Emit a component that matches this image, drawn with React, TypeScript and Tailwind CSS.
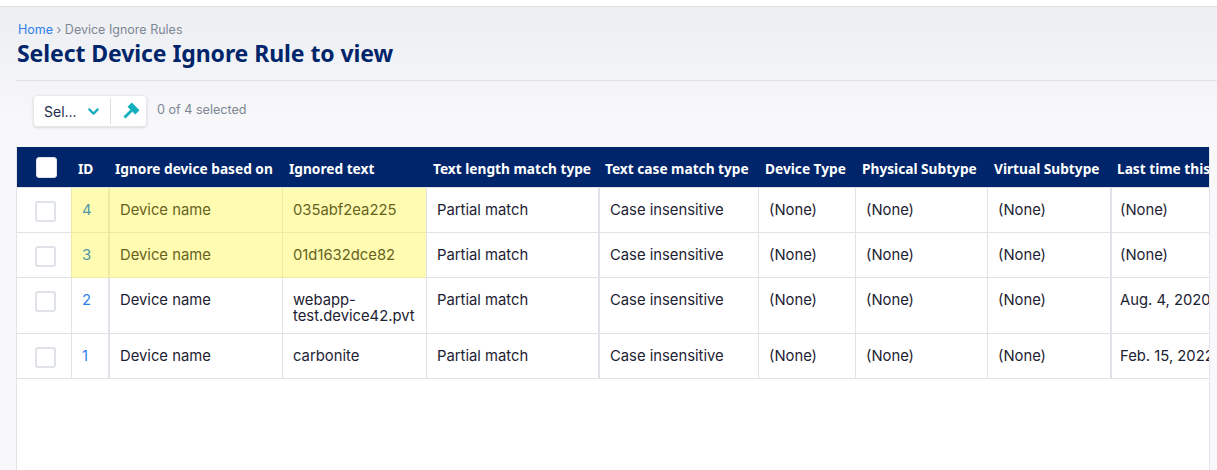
import React from 'react';
import { ChevronDown } from 'lucide-react';

interface Rule {
  id: number;
  text: string[];
  last: string;
  highlight?: boolean;
}

const rules: Rule[] = [
  { id: 4, text: ['035abf2ea225'], last: '(None)', highlight: true },
  { id: 3, text: ['01d1632dce82'], last: '(None)', highlight: true },
  { id: 2, text: ['webapp-', 'test.device42.pvt'], last: 'Aug. 4, 2020, 1:15 p.m.' },
  { id: 1, text: ['carbonite'], last: 'Feb. 15, 2022, 9:02 a.m.' },
];

const headers = [
  'ID',
  'Ignore device based on',
  'Ignored text',
  'Text length match type',
  'Text case match type',
  'Device Type',
  'Physical Subtype',
  'Virtual Subtype',
  'Last time this rule was used',
];

const cell = 'border-b border-l border-[#dfe2e7] px-[10px] pt-[14px] pb-[9px] align-top';
const yellow = 'bg-[#fffbb0] border-[#eeeaa6] text-[#66631f]';

const Hammer = () => (
  <svg viewBox="0 0 20 20" className="ml-[10px] h-[20px] w-[20px] text-[#12aebd]" fill="currentColor">
    <rect x="7" y="4.5" width="11" height="6" transform="rotate(45 12.5 7.5)" />
    <path d="M9.5 8.5 L11.5 10.5 L4.5 17.5 L2.5 15.5 Z" />
  </svg>
);

export default function App() {
  return (
    <div className="h-[470px] w-[1217px] overflow-hidden bg-white font-['Inter',sans-serif]">
      <div className="h-[7px] border-b border-[#dfe1e6] bg-white" />

      <div className="h-[463px] bg-gradient-to-b from-[#eceef2] via-[#f8f8fa] via-[25%] to-[#f8f8fa] pl-[16px]">
        {/* Header */}
        <div className="border-b border-[#dfe1e6] pb-[11px] pl-px pt-[15px]">
          <div className="pl-px text-[12.5px] leading-[15px] text-[#7d8794]">
            <a className="text-[#2f7fef]">Home</a> › Device Ignore Rules
          </div>
          <h1 className="font-['Noto_Sans',sans-serif] text-[23px] font-bold leading-[32px] tracking-[-0.08px] text-[#00256a]">
            Select Device Ignore Rule to view
          </h1>
        </div>

        {/* Actions */}
        <div className="flex items-center pl-[17px] pt-[14px]">
          <div className="flex h-[32px] w-[114px] items-center rounded-[4px] border border-[#e6e8ec] bg-white shadow-sm">
            <span className="pl-[10px] text-[14px] text-[#1d2b4a]">Sel...</span>
            <ChevronDown className="ml-[8px] h-[17px] w-[17px] text-[#12aebd]" strokeWidth={3} />
            <div className="ml-[8px] h-[26px] w-px bg-[#dcdfe4]" />
            <Hammer />
          </div>
          <span className="ml-[10px] -translate-y-[1px] text-[12.6px] text-[#7d8794]">0 of 4 selected</span>
        </div>

        {/* Table */}
        <div className="mt-[20px] h-[400px] w-[1194px] overflow-hidden border-x border-[#e2e4e9] bg-white">
          <table className="w-[1400px] table-fixed border-separate border-spacing-0 text-[14.8px] leading-[16px] text-[#1d2233]">
            <colgroup>
              <col className="w-[54px]" />
              <col className="w-[37px]" />
              <col className="w-[174px]" />
              <col className="w-[144px]" />
              <col className="w-[172px]" />
              <col className="w-[160px]" />
              <col className="w-[97px]" />
              <col className="w-[132px]" />
              <col className="w-[123px]" />
              <col className="w-[307px]" />
            </colgroup>
            <thead>
              <tr className="h-[41px] bg-[#00256a] text-left font-['Noto_Sans',sans-serif] text-[13.7px] font-bold text-white">
                <th className="border-b border-[#dfe2e7] pl-[19px]">
                  <div className="h-[21px] w-[21px] rounded-[3px] border border-[#dfe2e7] bg-white" />
                </th>
                {headers.map((h) => (
                  <th key={h} className="whitespace-nowrap border-b border-[#dfe2e7] pl-[7px] pt-[3px]">
                    {h}
                  </th>
                ))}
              </tr>
            </thead>
            <tbody>
              {rules.map((r) => {
                const tint = r.highlight ? yellow : '';
                return (
                  <tr key={r.id} className="h-[45px]">
                    <td className="border-b border-[#dfe2e7] pl-[18px] align-top">
                      <div className="mt-[13px] h-[21px] w-[21px] rounded-[3px] border-2 border-[#dfe2e7] bg-white" />
                    </td>
                    <td className={`${cell} ${tint}`}>
                      <a className={r.highlight ? 'text-[#4f96a8]' : 'text-[#2f7fef]'}>{r.id}</a>
                    </td>
                    <td className={`${cell} !border-l-[2px] ${tint}`}>Device name</td>
                    <td className={`${cell} ${tint}`}>
                      {r.text.map((t) => (
                        <div key={t}>{t}</div>
                      ))}
                    </td>
                    <td className={`${cell} whitespace-nowrap`}>Partial match</td>
                    <td className={`${cell} !border-l-[2px] whitespace-nowrap`}>Case insensitive</td>
                    <td className={cell}>(None)</td>
                    <td className={cell}>(None)</td>
                    <td className={cell}>(None)</td>
                    <td className={`${cell} !border-l-[2px] !pl-[8px] whitespace-nowrap`}>{r.last}</td>
                  </tr>
                );
              })}
            </tbody>
          </table>
        </div>
      </div>
    </div>
  );
}
